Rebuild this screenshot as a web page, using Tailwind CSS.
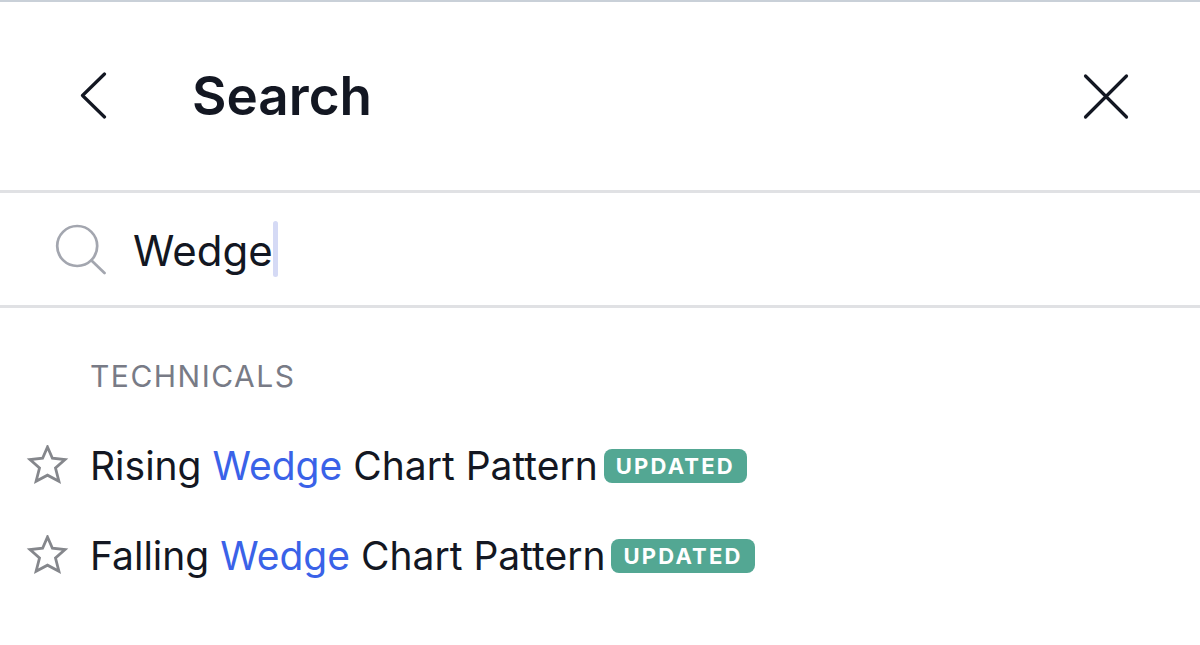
<!DOCTYPE html>
<html lang="en">
  <head>
    <meta charset="UTF-8" />
    <meta name="viewport" content="width=device-width, initial-scale=1.0" />
    <title>Search</title>
    <script src="https://cdn.jsdelivr.net/npm/@tailwindcss/browser@4"></script>
  </head>
  <body class="min-h-screen bg-white font-['Inter',sans-serif] text-[#131722]">
    <!-- Header -->
    <header class="flex items-center border-t-2 border-b-3 border-t-[#c9d0d8] border-b-[#e0e1e4] pt-15 pr-[70px] pb-15 pl-[76px]">
      <button type="button" aria-label="Back" class="mr-20 flex h-17 items-center">
        <svg class="h-12 w-9" viewBox="0 0 36 48" fill="none" stroke="currentColor" stroke-width="3.200" stroke-linecap="round" stroke-linejoin="round">
          <path d="M28.500 2 6.500 23.500 28.500 45" />
        </svg>
      </button>
      <h1 class="text-[53px] leading-17 font-semibold">Search</h1>
      <button type="button" aria-label="Close" class="ml-auto flex h-17 items-center">
        <svg class="size-12" viewBox="0 0 48 48" fill="none" stroke="currentColor" stroke-width="3.200" stroke-linecap="round">
          <path d="M3.500 4 44.500 45M44.500 4 3.500 45" />
        </svg>
      </button>
    </header>

    <!-- Search box -->
    <form class="flex h-[115px] items-center border-b-3 border-[#e0e1e4] pl-[54px]">
      <label for="query" class="mr-[27px]" aria-label="Search">
        <svg class="size-[52px]" viewBox="0 0 52 52" fill="none" stroke="#a3a6af" stroke-width="2.700" stroke-linecap="round">
          <circle cx="23.200" cy="23" r="20" />
          <path d="M37.500 37.500 50.500 50" />
        </svg>
      </label>
      <input
        type="text"
        id="query"
        name="query"
        value="Wedge"
        autocomplete="off"
        class="field-sizing-content pt-1 text-[42px] leading-14 outline-none"
      />
      <span class="h-14 w-[5px] rounded-sm bg-[#d5daf5]"></span>
    </form>

    <!-- Results -->
    <main class="px-[26px] pt-12">
      <h2 class="pl-16 text-[30px] leading-10 tracking-wider text-[#787b86]">TECHNICALS</h2>
      <ul class="mt-[25px]">
        <li class="flex h-[90px] items-center">
          <button type="button" aria-label="Add to favorites" class="mr-[21px]">
            <svg class="size-[43px]" viewBox="0 0 43 43" fill="none" stroke="#85878c" stroke-width="2.800">
              <path d="M21.500 2 26.400 13.200 39 14.500 29.500 23 32.900 36.200 21.500 30.200 10.100 36.200 13.500 23 4 14.500 16.600 13.200Z" />
            </svg>
          </button>
          <a href="#" class="text-[39px] leading-12">Rising <span class="text-[#3a62e8]">Wedge</span> Chart Pattern</a>
          <span class="ml-1.5 rounded-lg bg-[#53a793] px-3 text-[22px] leading-[34px] font-bold tracking-widest text-white">UPDATED</span>
        </li>
        <li class="flex h-[90px] items-center">
          <button type="button" aria-label="Add to favorites" class="mr-[21px]">
            <svg class="size-[43px]" viewBox="0 0 43 43" fill="none" stroke="#85878c" stroke-width="2.800">
              <path d="M21.500 2 26.400 13.200 39 14.500 29.500 23 32.900 36.200 21.500 30.200 10.100 36.200 13.500 23 4 14.500 16.600 13.200Z" />
            </svg>
          </button>
          <a href="#" class="text-[39px] leading-12">Falling <span class="text-[#3a62e8]">Wedge</span> Chart Pattern</a>
          <span class="ml-1.5 rounded-lg bg-[#53a793] px-3 text-[22px] leading-[34px] font-bold tracking-widest text-white">UPDATED</span>
        </li>
      </ul>
    </main>
  </body>
</html>
